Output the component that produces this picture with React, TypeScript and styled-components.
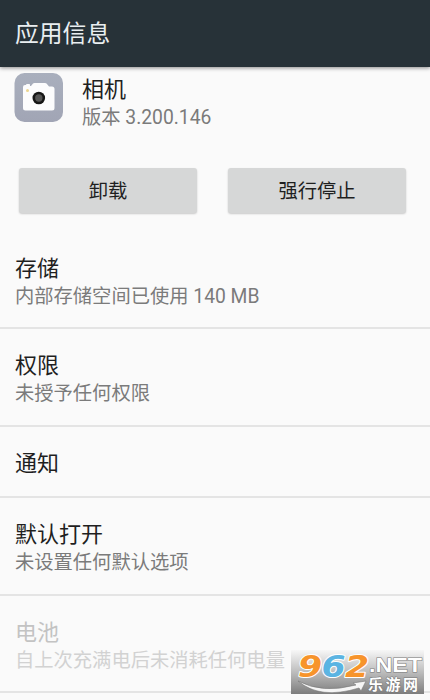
import React from "react";
import styled, { createGlobalStyle } from "styled-components";

const GlobalStyle = createGlobalStyle`
	* {
		box-sizing: border-box;
	}
	body {
		margin: 0;
		background-color: #fafafa;
		font-family: Roboto, "Noto Sans CJK SC", sans-serif;
	}
`;

const Container = styled.div`
	position: relative;
	width: 430px;
	height: 700px;
	overflow: hidden;
	background-color: #fafafa;
`;

const Header = styled.header`
	position: relative;
	height: 67px;
	padding-left: 15px;
	display: flex;
	align-items: center;
	background-color: #273238;
	box-shadow: 0 1px 4px rgba(0, 0, 0, 0.45);
`;

const HeaderTitle = styled.h1`
	margin: 0;
	font-size: 23.8px;
	font-weight: 400;
	line-height: 36px;
	color: #e9eef0;
`;

const AppInfo = styled.section`
	height: 101px;
	padding: 6px 15px 0 14px;
	display: flex;
	gap: 19px;
`;

const AppText = styled.div`
	padding-top: 3px;
`;

const Title = styled.h2`
	margin: 0;
	font-size: 22px;
	font-weight: 400;
	line-height: 28px;
	color: #1f1f1f;
`;

const Summary = styled.p`
	margin: 0;
	font-size: 19.3px;
	line-height: 28px;
	white-space: nowrap;
	color: #7b7b7b;
`;

const Buttons = styled.div`
	height: 75px;
	padding: 0 24px 0 19px;
	display: flex;
	gap: 31px;
`;

const Button = styled.button`
	width: 178px;
	height: 45px;
	padding: 0 0 1px;
	border: none;
	border-radius: 3px;
	background-color: #d6d7d7;
	box-shadow: 0 1px 2px rgba(0, 0, 0, 0.2);
	font-family: inherit;
	font-size: 19.3px;
	color: #1f1f1f;
`;

const Row = styled.li<{ $height: number; $disabled?: boolean }>`
	height: ${props => props.$height}px;
	padding: 12px 15px 0;
	border-bottom: 2px solid #e4e4e4;
	${Title} {
		color: ${props => (props.$disabled ? "#c3c3c3" : "#1f1f1f")};
	}
	${Summary} {
		color: ${props => (props.$disabled ? "#d2d2d2" : "#7b7b7b")};
	}
`;

const List = styled.ul`
	margin: 0;
	padding: 0;
	list-style: none;
	${Row} + ${Row} {
		padding-top: 23px;
	}
`;

const Watermark = styled.svg`
	position: absolute;
	left: 291px;
	top: 650px;
`;

interface RowInterface {
	title: string;
	summary?: string;
	height: number;
	disabled?: boolean;
}

const rows: RowInterface[] = [
	{ title: "存储", summary: "内部存储空间已使用 140 MB", height: 86 },
	{ title: "权限", summary: "未授予任何权限", height: 98 },
	{ title: "通知", height: 71 },
	{ title: "默认打开", summary: "未设置任何默认选项", height: 98 },
	{ title: "电池", summary: "自上次充满电后未消耗任何电量", height: 97, disabled: true },
];

function CameraIcon() {
	return (
		<svg width="49" height="50" viewBox="0 0 49 50">
			<defs>
				<linearGradient id="camera" x1="0" y1="0" x2="0" y2="1">
					<stop offset="0" stopColor="#a9afbd" />
					<stop offset="1" stopColor="#a1a5b5" />
				</linearGradient>
			</defs>
			<rect x="0.5" y="0" width="48.5" height="49" rx="10" fill="url(#camera)" />
			<path
				d="M11 12Q9 12 9 14V35Q9 37.500 11.500 37.500H38Q40.500 37.500 40.500 35V16Q40.500 13.500 38 13.500H35L32.500 10.500Q32 10 31 10H20.500Q19.500 10 19 10.500L17 13H16V11.500Q16 11 15 11H13Q12 11 12 12Z"
				fill="#fcfcfd"
			/>
			<circle cx="13.500" cy="17.500" r="1.500" fill="#ecd58f" />
			<circle cx="24.800" cy="25" r="6.300" fill="#171717" />
			<circle cx="24.800" cy="25" r="3.700" fill="#555" />
		</svg>
	);
}

function SiteMark() {
	return (
		<Watermark width="133" height="44" viewBox="0 0 133 44">
			<defs>
				<linearGradient id="shade" x1="0" y1="0" x2="0" y2="1">
					<stop offset="0" stopColor="#f7f7f7" />
					<stop offset="0.5" stopColor="#bdbdbd" />
					<stop offset="1" stopColor="#7d7d7d" />
				</linearGradient>
			</defs>
			<rect width="133" height="44" fill="url(#shade)" />
			<path
				d="M7 31Q31 44 65 35L62 33L75 31L70 41L68 38Q29 50 7 31Z"
				fill="#f5f5f5"
				stroke="#777"
				strokeWidth="0.600"
			/>
			<g
				fontFamily="DejaVu Sans, sans-serif"
				fontWeight="700"
				fontStyle="italic"
				fontSize="31"
				stroke="#fff"
				strokeWidth="2"
				paintOrder="stroke"
				strokeLinejoin="round"
				transform="translate(7 27) scale(1.120 1)"
			>
				<text x="0" fill="#f7942b">9</text>
				<text x="21" fill="#5bb4e2">6</text>
				<text x="42" fill="#f7942b">2</text>
			</g>
			<g fill="#fff" stroke="#777" strokeWidth="1" paintOrder="stroke" fontWeight="700">
				<text
					x="78"
					y="22"
					fontFamily="Liberation Sans, sans-serif"
					fontSize="20"
					textLength="53"
					lengthAdjust="spacingAndGlyphs"
				>
					.NET
				</text>
				<text x="77" y="39.500" fontFamily="Noto Sans CJK SC, sans-serif" fontSize="15" letterSpacing="2.500">
					乐游网
				</text>
			</g>
		</Watermark>
	);
}

export default function App() {
	return (
		<Container>
			<GlobalStyle />
			<Header>
				<HeaderTitle>应用信息</HeaderTitle>
			</Header>
			<AppInfo>
				<CameraIcon />
				<AppText>
					<Title>相机</Title>
					<Summary>版本 3.200.146</Summary>
				</AppText>
			</AppInfo>
			<Buttons>
				<Button>卸载</Button>
				<Button>强行停止</Button>
			</Buttons>
			<List>
				{rows.map(row => (
					<Row key={row.title} $height={row.height} $disabled={row.disabled}>
						<Title>{row.title}</Title>
						{row.summary && <Summary>{row.summary}</Summary>}
					</Row>
				))}
			</List>
			<SiteMark />
		</Container>
	);
}
